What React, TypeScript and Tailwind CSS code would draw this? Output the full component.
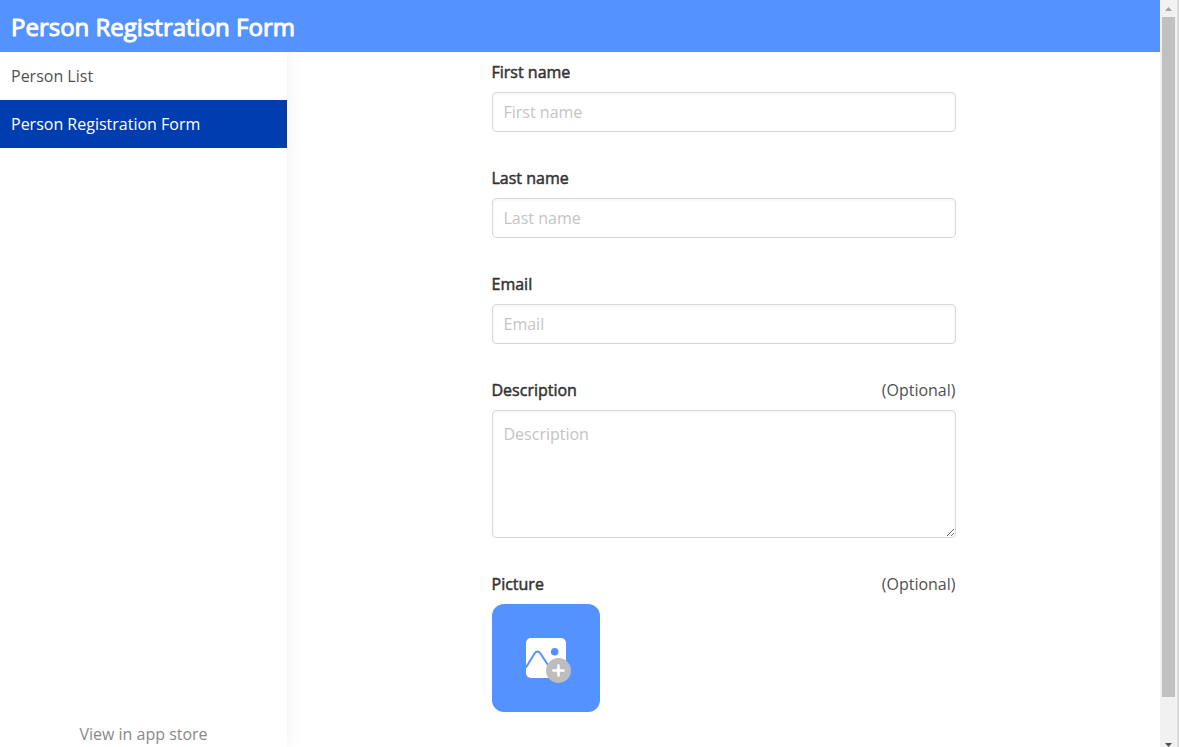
import type { ReactNode } from 'react';

function Field({ id, label, optional, children }: { id: string; label: string; optional?: boolean; children: ReactNode }) {
  return (
    <div className="flex flex-col gap-2">
      <div className="flex justify-between leading-6">
        <label htmlFor={id} className="text-[#333] [-webkit-text-stroke:0.5px_#333]">{label}</label>
        {optional && <span>(Optional)</span>}
      </div>
      {children}
    </div>
  );
}

const inputStyle =
  'w-full rounded border border-[#d8d8d8] bg-white px-[11px] shadow-[inset_0_1px_3px_rgba(0,0,0,0.06)] outline-none placeholder:text-[#c4c4c4]';

function PictureIcon() {
  return (
    <svg width="46" height="46" viewBox="0 0 46 46" fill="none" aria-hidden="true">
      <rect width="40" height="40" rx="5" fill="#fff" />
      <path d="M0 29.5 8.5 15.5Q11.5 11.5 14.5 15.5L22 27" stroke="#5492ff" strokeWidth="2" />
      <circle cx="28.7" cy="13.7" r="3.8" fill="#5492ff" />
      <circle cx="32.5" cy="32.5" r="12.5" fill="#bdbdbd" />
      <path d="M32.5 27.5v10M27.5 32.5h10" stroke="#fff" strokeWidth="2.6" strokeLinecap="round" />
    </svg>
  );
}

function Scrollbar() {
  return (
    <div className="flex w-[19px] shrink-0 flex-col items-center border-r-2 border-[#dcdcdc] bg-[#f1f1f1]" aria-hidden="true">
      <svg width="17" height="17" viewBox="0 0 17 17" className="shrink-0">
        <path d="M5 11 8.5 7 12 11Z" fill="#a3a3a3" />
      </svg>
      <div className="w-[13px] grow bg-[#c1c1c1]" />
      <div className="h-[46px] shrink-0" />
      <svg width="17" height="4" viewBox="0 0 17 4" className="shrink-0">
        <path d="M5 0H12L8.5 4Z" fill="#505050" />
      </svg>
    </div>
  );
}

export default function App() {
  return (
    <div className="flex h-screen bg-white font-['Open_Sans',sans-serif] text-base text-[#505050]">
      <div className="flex min-w-0 grow flex-col">
        <header className="z-20 flex h-[52px] shrink-0 items-center bg-[#5492ff] px-[11px] pt-0.5">
          <h1 className="text-2xl text-white [-webkit-text-stroke:1px_#fff]">Person Registration Form</h1>
        </header>
        <div className="flex min-h-0 grow">
          <nav className="z-10 flex w-[287px] shrink-0 flex-col bg-white shadow-[0_0_16px_rgba(0,0,0,0.07)]">
            <a href="#list" className="flex h-12 items-center px-[11px]">Person List</a>
            <a href="#form" className="flex h-12 items-center bg-[#003eb0] px-[11px] text-white" aria-current="page">
              Person Registration Form
            </a>
            <a href="#store" className="mt-auto text-center leading-[26px] text-[#888]">View in app store</a>
          </nav>
          <main className="min-w-0 grow overflow-hidden pt-2">
            <form className="mx-auto flex max-w-[464px] flex-col gap-[34px]">
              <Field id="first" label="First name">
                <input id="first" placeholder="First name" className={`h-10 ${inputStyle}`} />
              </Field>
              <Field id="last" label="Last name">
                <input id="last" placeholder="Last name" className={`h-10 ${inputStyle}`} />
              </Field>
              <Field id="email" label="Email">
                <input id="email" type="email" placeholder="Email" className={`h-10 ${inputStyle}`} />
              </Field>
              <Field id="description" label="Description" optional>
                <textarea id="description" placeholder="Description" className={`block h-32 resize py-[11px] ${inputStyle}`} />
              </Field>
              <Field id="picture" label="Picture" optional>
                <button id="picture" type="button" className="flex size-[108px] items-center justify-center rounded-xl bg-[#5492ff] pt-[5px] pl-[7px]">
                  <PictureIcon />
                </button>
              </Field>
            </form>
          </main>
        </div>
      </div>
      <Scrollbar />
    </div>
  );
}
